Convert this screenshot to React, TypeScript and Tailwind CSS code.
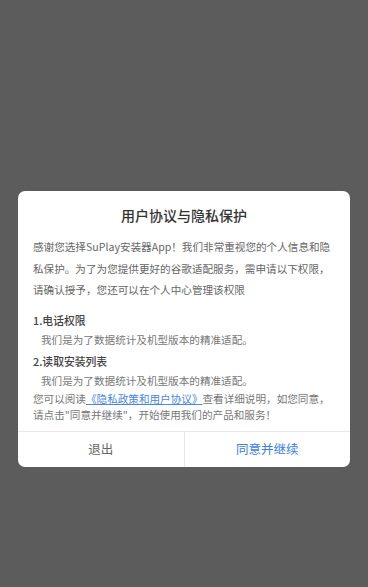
export default function App() {
  return (
    <div
      className="w-[368px] h-[587px] bg-[#5c5c5c] flex flex-col"
      style={{ fontFamily: '"Noto Sans CJK SC", "Noto Sans", sans-serif' }}
    >
      <div className="h-[191px] shrink-0" />
      <div className="mx-[18px] w-[332px] h-[276px] bg-white rounded-[7px] flex flex-col overflow-hidden">
        <div className="pt-[14px] text-center text-[14px] leading-[20px] font-medium text-[#333333]">
          用户协议与隐私保护
        </div>

        <div className="px-[15px] flex-1">
          <p className="mt-[11px] text-[10.6px] leading-[21.5px] text-[#666666]">
            感谢您选择SuPlay安装器App！我们非常重视您的个人信息和隐
            <br />
            私保护。为了为您提供更好的谷歌适配服务，需申请以下权限，
            <br />
            请确认授予，您还可以在个人中心管理该权限
          </p>

          <div className="mt-[10px] text-[10.8px] leading-[19px] font-medium text-[#444444]">1.电话权限</div>
          <div className="pl-[8px] text-[10.6px] leading-[19px] text-[#777777]">
            我们是为了数据统计及机型版本的精准适配。
          </div>
          <div className="mt-[3px] text-[10.8px] leading-[19px] font-medium text-[#444444]">2.读取安装列表</div>
          <div className="pl-[8px] text-[10.6px] leading-[20px] text-[#777777]">
            我们是为了数据统计及机型版本的精准适配。
          </div>

          <p className="text-[10.6px] leading-[16px] text-[#777777]">
            您可以阅读
            <span className="text-[#4a86e8] underline">《隐私政策和用户协议》</span>
            查看详细说明，如您同意，
            <br />
            请点击"同意并继续"，开始使用我们的产品和服务！
          </p>
        </div>

        <div className="h-[36px] shrink-0 border-t border-[#e8e8e8] flex">
          <button className="flex-1 text-[12.5px] text-[#666666] border-r border-[#e8e8e8]">退出</button>
          <button className="flex-1 text-[12.5px] text-[#3a7ee8]">同意并继续</button>
        </div>
      </div>
    </div>
  );
}
